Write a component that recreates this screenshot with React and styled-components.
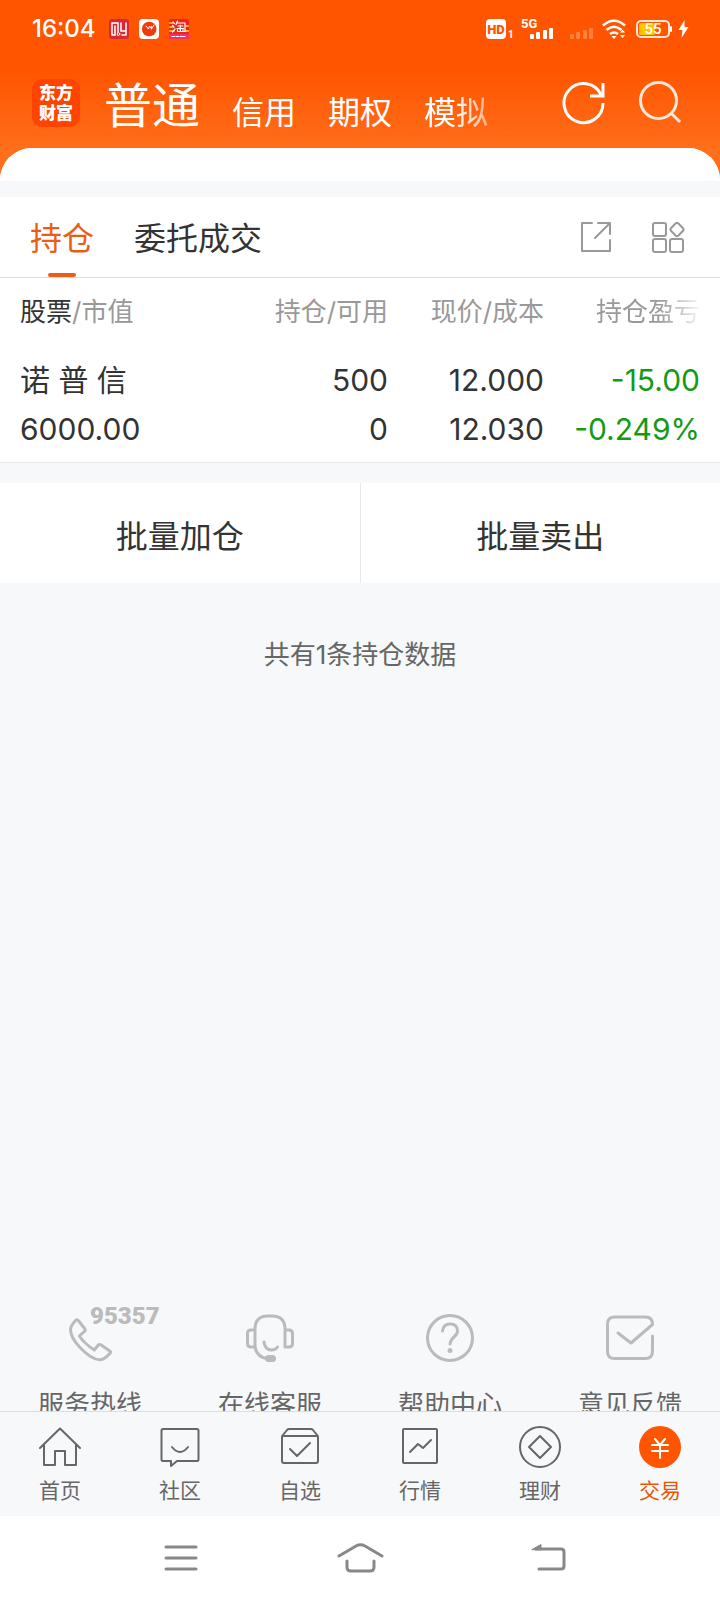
import * as React from "react"
import styled, { createGlobalStyle, css } from "styled-components"

const GlobalStyle = createGlobalStyle`
  * {
    box-sizing: border-box;
  }

  body {
    background: #ffffff;
    color: #333333;
    font-family: Inter, "Noto Sans CJK SC", sans-serif;
    margin: 0;
  }

  button {
    background: none;
    border: 0;
    color: inherit;
    cursor: pointer;
    font: inherit;
    padding: 0;
  }

  a {
    color: inherit;
    text-decoration: none;
  }

  svg {
    display: block;
    flex: none;
  }
`

const Screen = styled.div`
  display: flex;
  flex-direction: column;
  height: 100vh;
`

const Header = styled.header`
  background: linear-gradient(#ff5500 70px, #ff6e1a 148px);
  color: #ffffff;
  margin-bottom: -32px;
  padding-bottom: 32px;
`

const StatusBar = styled.div`
  align-items: center;
  display: flex;
  height: 58px;
  justify-content: space-between;
  padding: 0 30px 0 32px;
`

const StatusGroup = styled.div`
  align-items: center;
  display: flex;
  gap: 10px;
`

const Clock = styled.span`
  font-size: 24px;
  font-weight: 500;
  line-height: 28px;
  margin-right: 3px;
`

const AccountBar = styled.div`
  align-items: center;
  display: flex;
  height: 90px;
  padding: 0 38px 0 32px;
`

const Brand = styled.a`
  background: #ff4400;
  border-radius: 10px;
  display: grid;
  font-family: "Noto Sans CJK SC", sans-serif;
  font-size: 17px;
  font-weight: 900;
  height: 48px;
  line-height: 20px;
  margin-right: 24px;
  padding: 3px 0 5px;
  text-align: center;
  width: 48px;
`

const AccountNav = styled.nav`
  align-items: flex-end;
  display: flex;
  flex: 1;
  gap: 32px;
  padding-top: 6px;
`

const AccountTab = styled.button`
  font-size: ${({ $active }) => ($active ? 48 : 32)}px;
  line-height: ${({ $active }) => ($active ? 56 : 42)}px;
  white-space: nowrap;

  ${({ $faded }) =>
    $faded &&
    css`
      mask-image: linear-gradient(90deg, #000 50%, rgba(0, 0, 0, 0.5));
    `}
`

const HeaderActions = styled.div`
  display: flex;
  gap: 32px;
`

const Content = styled.main`
  background: #f7f8fa;
  border-radius: 32px 32px 0 0;
  display: flex;
  flex: 1;
  flex-direction: column;
  min-height: 0;
  overflow: hidden;
`

const SheetTop = styled.div`
  background: #ffffff;
  flex: none;
  height: 33px;
  margin-bottom: 16px;
`

const Panel = styled.section`
  background: #ffffff;
  border-bottom: 1px solid #e8e9ec;
  margin-bottom: 20px;
`

const TabBar = styled.div`
  align-items: center;
  border-bottom: 1px solid #dddddd;
  display: flex;
  gap: 40px;
  height: 81px;
  padding: 0 35px 0 30px;
`

const Tab = styled.button`
  color: ${({ $active }) => ($active ? "#ea5d15" : "#333333")};
  font-size: 32px;
  height: 80px;
  line-height: 80px;
  padding-top: 2px;
  position: relative;

  ${({ $active }) =>
    $active &&
    css`
      &::after {
        background: #ea5d15;
        border-radius: 2px;
        bottom: 0;
        content: "";
        height: 4px;
        left: calc(50% - 14px);
        position: absolute;
        width: 28px;
      }
    `}
`

const TabTools = styled.div`
  display: flex;
  gap: 38px;
  margin-left: auto;
`

const Table = styled.table`
  border-collapse: collapse;
  margin-bottom: 8px;
  table-layout: fixed;
  width: 100%;

  th,
  td {
    padding: 0;
    text-align: right;
    white-space: nowrap;
  }

  th:first-child,
  td:first-child {
    padding-left: 20px;
    text-align: left;
  }

  th:nth-child(2) {
    width: 172px;
  }

  th:nth-child(3) {
    width: 156px;
  }

  th:last-child,
  td:last-child {
    padding-right: 20px;
    width: 176px;
  }

  th {
    color: #999999;
    font-size: 26px;
    font-weight: 400;
    height: 62px;
  }

  th em {
    color: #333333;
    font-style: normal;
  }

  td {
    font-size: 30px;
    line-height: 49px;
    padding-top: 16px;
  }
`

const FadeLabel = styled.span`
  mask-image: linear-gradient(90deg, #000 60%, rgba(0, 0, 0, 0.1));
`

const Loss = styled.div`
  color: #159a15;
`

const BatchActions = styled.div`
  background: #ffffff;
  display: flex;
  flex: none;

  button {
    flex: 1;
    font-size: 32px;
    height: 100px;
    padding-top: 2px;
  }

  button:first-child {
    border-right: 1px solid #e8e9ec;
  }
`

const Summary = styled.p`
  color: #666666;
  font-size: 26px;
  line-height: 40px;
  margin: 52px 0 0;
  text-align: center;
`

// The row is taller than the room left above the bottom bar.
const Services = styled.div`
  display: flex;
  margin: auto 0 -14px;
`

const Service = styled.a`
  align-items: center;
  color: #666666;
  display: flex;
  flex: 1;
  flex-direction: column;
  font-size: 26px;
  gap: 23px;
  line-height: 40px;
  position: relative;

  svg {
    color: #bbbbbb;
  }
`

const Hotline = styled.span`
  color: #bbbbbb;
  font-family: Roboto, sans-serif;
  font-size: 24px;
  font-weight: 900;
  left: 50%;
  line-height: 24px;
  position: absolute;
  top: -10px;
`

const BottomNav = styled.nav`
  background: #f7f8fa;
  border-top: 1px solid #dddddd;
  display: flex;
  height: 105px;
`

const BottomLink = styled.a`
  align-items: center;
  color: ${({ $active }) => ($active ? "#ea5504" : "#666666")};
  display: flex;
  flex: 1;
  flex-direction: column;
  font-size: 21px;
  gap: 6px;
  line-height: 32px;
  padding-top: 13px;
`

const SystemBar = styled.div`
  align-items: center;
  background: #ffffff;
  display: flex;
  height: 84px;
  justify-content: center;
  gap: 136px;
`

const SystemButton = styled.button`
  color: #888888;
`

const ToolButton = styled.button`
  color: #999999;
`

const Icon = ({ width = 44, height = 44, stroke = 2, children }) => (
  <svg
    aria-hidden="true"
    width={width}
    height={height}
    viewBox={`0 0 ${width} ${height}`}
    fill="none"
    stroke="currentColor"
    strokeWidth={stroke}
    strokeLinecap="round"
    strokeLinejoin="round"
  >
    {children}
  </svg>
)

const AppBadges = () => (
  <>
    <Icon width={20} height={20} stroke={1.5}>
      <rect width="20" height="20" rx="3" fill="#d52b35" stroke="none" />
      <path d="M3 16V4h6v12M6 7v9H3M12 4v8h5M12 8V4M17 4v12h-4" strokeLinejoin="miter" />
      <circle cx="9.5" cy="15" r="1.3" fill="#d52b35" strokeWidth="1" />
    </Icon>
    <Icon width={20} height={20} stroke={1}>
      <rect width="20" height="20" rx="4" fill="#fff" stroke="none" />
      <circle cx="10.2" cy="10" r="7.3" fill="#f03a0a" stroke="none" />
      <path d="M7 7l2.500 3 1-3 2 3 2.500-4M12.500 10V7.500" />
    </Icon>
    <Icon width={20} height={20} stroke={1.2}>
      <rect width="20" height="20" rx="2" fill="#e8261d" stroke="none" />
      <path d="M1 4h3M1 8h3M1 12h4M17 7h2M16 12h3" stroke="#ffb11f" strokeWidth="2" />
      <path d="M0 15h20v3q0 2-2 2H2q-2 0-2-2z" fill="#f52f64" stroke="none" />
      <path d="M4 3l1.500 1.500M3.500 6.500L5 8M3.500 13L6 10M8.500 2L7 5.500M8 4h8v8.500h-2M9 7h5M8 9.500h6.500M11.300 6v6M8.500 10.500v2h5.500v-2" />
      <path d="M3 17.500h3M7.500 17.500h2M11 17.500h5" />
    </Icon>
  </>
)

const Signals = () => (
  <svg aria-hidden="true" width="204" height="24" viewBox="0 0 204 24" fill="#fff">
    <rect y="2" width="20" height="20" rx="4" />
    <text x="10" y="17" fill="#ff5500" fontFamily="Roboto" fontSize="13" fontWeight="900" textAnchor="middle">HD</text>
    <text x="22" y="21" fontFamily="Roboto" fontSize="10" fontWeight="700">1</text>
    <text x="35" y="11" fontFamily="Roboto" fontSize="13" fontWeight="700">5G</text>
    <g id="bars">
      <rect x="44" y="17" width="4" height="5" rx="1" />
      <rect x="50" y="15" width="4" height="7" rx="1" />
      <rect x="57" y="13" width="4" height="9" rx="1" />
      <rect x="63" y="11" width="4" height="11" rx="1" />
    </g>
    <use href="#bars" x="40" opacity=".25" />
    <g fill="none" stroke="#fff" strokeWidth="2.600">
      <path d="M117 8.500q11-9.500 22 0M120.500 13q7.500-6.500 15 0M124 17q4-3 8 0" />
    </g>
    <path d="M125.500 19h5l-2.500 3zM134 15.500l2.500-3 2.500 3zM134 18l2.500 3 2.500-3z" />
    <rect x="151" y="4" width="32" height="16" rx="4" fill="none" stroke="#ffe6d8" strokeWidth="2" />
    <rect x="153" y="6" width="16" height="12" rx="2" fill="#ffc400" />
    <rect x="184" y="9" width="2" height="6" rx="1" />
    <text x="167" y="17" fontFamily="Roboto" fontSize="15" fontWeight="500" textAnchor="middle">55</text>
    <path d="M198.500 3l-6 10h4l-1 8 7-11h-4z" />
  </svg>
)

const RefreshIcon = () => (
  <Icon stroke={3}>
    <path d="M39 13.500A19.500 19.500 0 1 0 41 22M41 2v13H28" strokeLinecap="butt" strokeLinejoin="miter" />
  </Icon>
)

const SearchIcon = () => (
  <Icon stroke={3}>
    <g opacity=".85">
      <circle cx="20.5" cy="19.5" r="18" />
      <path d="M33 32l9 9" strokeLinecap="butt" />
    </g>
  </Icon>
)

const ShareIcon = () => (
  <Icon width={34} height={34}>
    <path d="M13 3H3v28h28V20M19 3h12v11M31 3L16 18" />
  </Icon>
)

const WidgetsIcon = () => (
  <Icon width={34} height={34}>
    <rect x="2" y="3" width="13" height="13" rx="2" />
    <rect x="2" y="19" width="13" height="13" rx="2" />
    <rect x="19" y="19" width="13" height="13" rx="2" />
    <path d="M24.500 3.500q1.500-1.200 3 0l4.500 4.700q1.200 1.300 0 2.600L27.500 15.500q-1.500 1.200-3 0L20 10.800q-1.200-1.300 0-2.600z" />
  </Icon>
)

const PhoneIcon = () => (
  <Icon width={48} height={48} stroke={3}>
    <path d="M9.500 6.500q1.500-1.500 3 .3l6.300 8q1 1.500-.5 2.700l-5 4.500q5.500 8 15 14l4-5q1-1 2.500-.2l9 6.200q1.500 1 .2 2.300-5 6-10 6.500Q26 46 14 33.500 4.500 23.500 4.500 15.500q0-3.500 5-9z" />
  </Icon>
)

const HeadsetIcon = () => (
  <Icon width={48} height={48} stroke={3}>
    <path d="M9 32V15Q9 2 22 2h4q13 0 13 13v18M9 16H5q-3.500 0-3.500 3.500v10Q1.500 33 5 33h4zM39 16h4q3.500 0 3.500 3.500v10q0 3.500-3.500 3.500h-4zM9 32q1 11 12 12.500M18 28q1 8 7.500 8 4 0 6-3" />
    <rect x="20.5" y="42.5" width="8" height="4" rx="2" fill="currentColor" />
  </Icon>
)

const HelpIcon = () => (
  <Icon width={48} height={48} stroke={3}>
    <circle cx="24" cy="24" r="22.5" />
    <path d="M16.500 17q1-7 7.500-7 7.500 0 7.500 7 0 3-3.500 6t-4 7" />
    <circle cx="24" cy="36.5" r="1.5" fill="currentColor" strokeWidth="2" />
  </Icon>
)

const MailIcon = () => (
  <Icon width={48} height={48} stroke={3}>
    <path d="M46.500 22v15q0 7.500-7 7.500H8.500q-7 0-7-7V10q0-7 7-7h31q7 0 7 7.500L25 29 12 19" />
  </Icon>
)

const HomeIcon = () => (
  <Icon>
    <path d="M2 23L22 3.500 42 23M6 20v20h11V26h10v14h11V20" />
  </Icon>
)

const ChatIcon = () => (
  <Icon>
    <path d="M5 4h34q1.500 0 1.500 1.500v29Q40.500 36 39 36H19l-6 5v-5H5q-1.500 0-1.500-1.500v-29Q3.500 4 5 4zM14 22q8 10 16 0" />
  </Icon>
)

const WatchIcon = () => (
  <Icon>
    <path d="M5 10q-1 1-1 2v24q0 2 2 2h32q2 0 2-2V12q0-1-1-2l-4-5q-1-1-2-1H11q-1 0-2 1zM5 11h34M12 24l7 7 13-13" />
  </Icon>
)

const ChartIcon = () => (
  <Icon>
    <rect x="5" y="4" width="34" height="34" rx="1" />
    <path d="M12 27l8-8 5 4 8-8" />
  </Icon>
)

const WealthIcon = () => (
  <Icon>
    <circle cx="22" cy="22" r="20" />
    <path d="M22 11l11 11-11 11-11-11z" />
  </Icon>
)

const TradeIcon = () => (
  <Icon>
    <circle cx="22" cy="22" r="21" fill="#ff5500" stroke="none" />
    <path d="M17 14l5 6 5-6M22 20v13M14 20h16M14 26h16" stroke="#fff" />
  </Icon>
)

const MenuIcon = () => (
  <Icon width={48} height={36} stroke={3}>
    <path d="M14 7h30M14 18h30M14 29h30" />
  </Icon>
)

const SystemHomeIcon = () => (
  <Icon width={48} height={36} stroke={3}>
    <path d="M3 16L20 6q4.500-2.500 9 0l17 10M11 21v6q0 4 4 4h19q4 0 4-4v-6" />
  </Icon>
)

const BackIcon = () => (
  <Icon width={48} height={36} stroke={3}>
    <path d="M16 9h25q3 0 3 3v14q0 3-3 3H19" />
    <path d="M12 9.500l9-5v5z" fill="currentColor" strokeWidth="1" />
  </Icon>
)

const services = [
  { label: "服务热线", icon: <PhoneIcon />, phone: "95357" },
  { label: "在线客服", icon: <HeadsetIcon /> },
  { label: "帮助中心", icon: <HelpIcon /> },
  { label: "意见反馈", icon: <MailIcon /> },
]

const links = [
  { label: "首页", icon: <HomeIcon /> },
  { label: "社区", icon: <ChatIcon /> },
  { label: "自选", icon: <WatchIcon /> },
  { label: "行情", icon: <ChartIcon /> },
  { label: "理财", icon: <WealthIcon /> },
  { label: "交易", icon: <TradeIcon />, active: true },
]

const App = () => (
  <Screen>
    <GlobalStyle />

    <Header>
      <StatusBar>
        <StatusGroup>
          <Clock>16:04</Clock>
          <AppBadges />
        </StatusGroup>
        <Signals />
      </StatusBar>

      <AccountBar>
        <Brand href="#">
          <span>东方</span>
          <span>财富</span>
        </Brand>
        <AccountNav>
          <AccountTab $active>普通</AccountTab>
          <AccountTab>信用</AccountTab>
          <AccountTab>期权</AccountTab>
          <AccountTab $faded>模拟</AccountTab>
        </AccountNav>
        <HeaderActions>
          <button aria-label="刷新"><RefreshIcon /></button>
          <button aria-label="搜索"><SearchIcon /></button>
        </HeaderActions>
      </AccountBar>
    </Header>

    <Content>
      <SheetTop />

      {/* Positions */}
      <Panel>
        <TabBar>
          <Tab $active>持仓</Tab>
          <Tab>委托成交</Tab>
          <TabTools>
            <ToolButton aria-label="分享"><ShareIcon /></ToolButton>
            <ToolButton aria-label="更多"><WidgetsIcon /></ToolButton>
          </TabTools>
        </TabBar>
        <Table>
          <thead>
            <tr>
              <th><em>股票</em>/市值</th>
              <th>持仓/可用</th>
              <th>现价/成本</th>
              <th><FadeLabel>持仓盈亏</FadeLabel></th>
            </tr>
          </thead>
          <tbody>
            <tr>
              <td>诺 普 信<br />6000.00</td>
              <td>500<br />0</td>
              <td>12.000<br />12.030</td>
              <td><Loss>-15.00<br />-0.249%</Loss></td>
            </tr>
          </tbody>
        </Table>
      </Panel>

      <BatchActions>
        <button>批量加仓</button>
        <button>批量卖出</button>
      </BatchActions>

      <Summary>共有1条持仓数据</Summary>

      {/* Support */}
      <Services>
        {services.map(({ label, icon, phone }) => (
          <Service key={label} href="#">
            {icon}
            {phone && <Hotline>{phone}</Hotline>}
            {label}
          </Service>
        ))}
      </Services>
    </Content>

    <BottomNav>
      {links.map(({ label, icon, active }) => (
        <BottomLink key={label} href="#" $active={active}>
          {icon}
          {label}
        </BottomLink>
      ))}
    </BottomNav>

    <SystemBar>
      <SystemButton aria-label="菜单"><MenuIcon /></SystemButton>
      <SystemButton aria-label="主屏幕"><SystemHomeIcon /></SystemButton>
      <SystemButton aria-label="返回"><BackIcon /></SystemButton>
    </SystemBar>
  </Screen>
)

export default App
